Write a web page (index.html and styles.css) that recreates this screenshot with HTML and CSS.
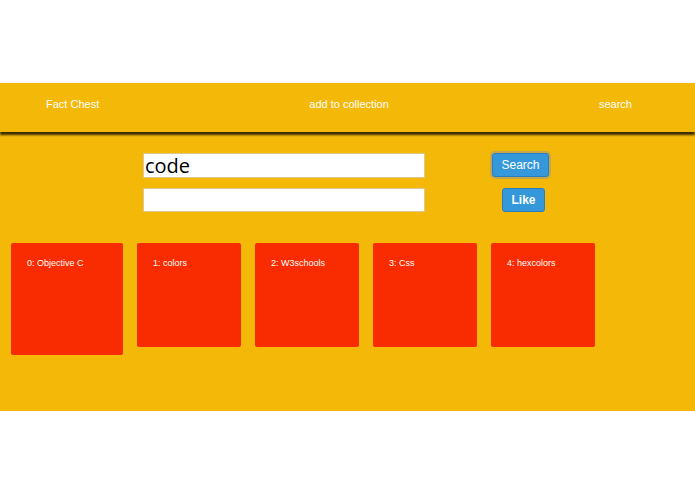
FILE: index.html
```html
<!DOCTYPE html>
<html>
<head>
<meta charset="utf-8">
<link rel="stylesheet" href="styles.css">
</head>
<body>
<div class="page">
  <div class="app">
    <header class="topbar">
      <span class="nav-item">Fact Chest</span>
      <span class="nav-item">add to collection</span>
      <span class="nav-item">search</span>
    </header>
    <section class="form">
      <div class="inputs">
        <input class="field" type="text" value="code">
        <input class="field field-second" type="text" value="">
      </div>
      <div class="buttons">
        <button class="btn btn-search">Search</button>
        <button class="btn btn-like">Like</button>
      </div>
    </section>
    <section class="cards">
      <div class="card card-big">0: Objective C</div>
      <div class="card">1: colors</div>
      <div class="card">2: W3schools</div>
      <div class="card">3: Css</div>
      <div class="card">4: hexcolors</div>
    </section>
  </div>
</div>
</body>
</html>
```
FILE: styles.css
```css
html, body {
  margin: 0;
  padding: 0;
  background: #ffffff;
  font-family: "Liberation Sans", Arial, sans-serif;
}
.page {
  padding-top: 83px;
}
.app {
  background: #f4b908;
  height: 328px;
}
.topbar {
  height: 49px;
  box-sizing: border-box;
  display: flex;
  justify-content: space-between;
  align-items: flex-start;
  padding: 15px 63px 0 46px;
  box-shadow: 0 3px 2px rgba(40, 28, 0, 0.9);
  position: relative;
}
.nav-item {
  color: #ffffff;
  font-size: 11px;
  line-height: 13px;
}
.form {
  display: flex;
  align-items: flex-start;
  padding-top: 21px;
}
.inputs {
  margin-left: 143px;
  width: 282px;
  display: flex;
  flex-direction: column;
}
.field {
  box-sizing: border-box;
  width: 282px;
  height: 25px;
  margin: 0;
  padding: 0 1px;
  border: 1px solid #dcc88e;
  background: #ffffff;
  font-family: "Open Sans", "DejaVu Sans", sans-serif;
  font-size: 20px;
  color: #000000;
  outline: none;
}
.field-second {
  margin-top: 10px;
  height: 24px;
}
.buttons {
  margin-left: 67px;
  display: flex;
  flex-direction: column;
  align-items: flex-start;
}
.btn {
  box-sizing: border-box;
  margin: 0;
  background: #3498db;
  border: 1px solid #2a7fbd;
  border-radius: 3px;
  color: #ffffff;
  font-family: "Liberation Sans", Arial, sans-serif;
  font-size: 12px;
  padding: 0;
  height: 24px;
}
.btn-search {
  width: 57px;
  box-shadow: 0 0 0 2px #c6a64a;
}
.btn-like {
  width: 43px;
  margin-left: 10px;
  margin-top: 11px;
  font-weight: bold;
}
.cards {
  display: flex;
  align-items: flex-start;
  gap: 14px;
  padding-left: 11px;
  margin-top: 31px;
}
.card {
  box-sizing: border-box;
  width: 104px;
  height: 104px;
  background: #f92b00;
  border-radius: 2px;
  color: #ffffff;
  font-size: 9px;
  line-height: 11px;
  padding: 15px 16px;
}
.card-big {
  width: 112px;
  height: 112px;
}
```
